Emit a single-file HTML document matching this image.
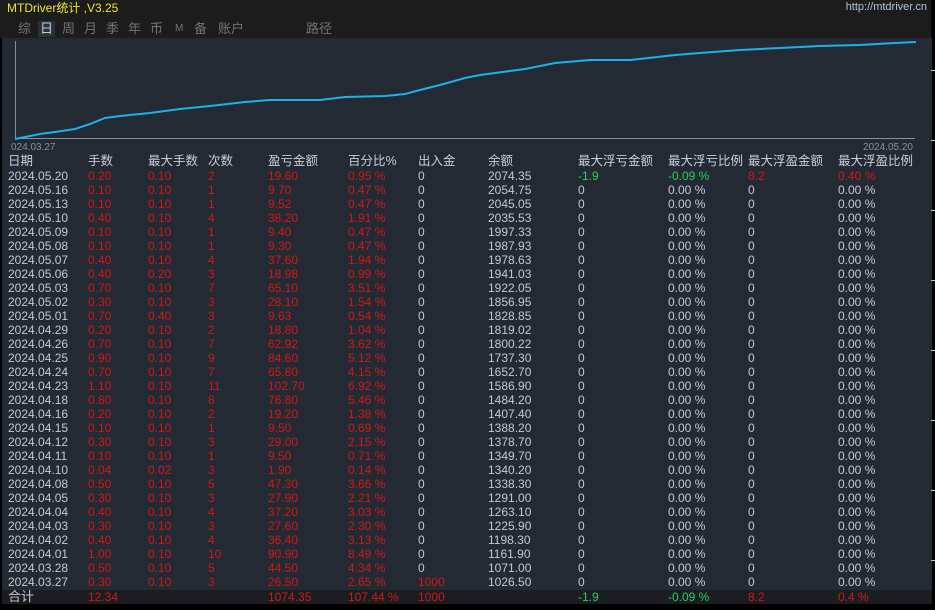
<!DOCTYPE html>
<html><head><meta charset="utf-8"><style>
*{margin:0;padding:0;box-sizing:border-box}
body{width:935px;height:610px;background:#000;position:relative;overflow:hidden;font-family:"Liberation Sans","Noto Sans CJK SC",sans-serif;font-size:12px;color:#c3c9d3}
.top{position:absolute;left:0;top:0;width:931px;height:38px;background:#1c1c1c}
.title{position:absolute;left:7px;top:1px;color:#e8e830;font-size:12px;line-height:14px}
.url{position:absolute;right:8px;top:1px;color:#b0c4de;font-size:11px}
.tabs{position:absolute;left:18px;top:21px;font-size:13px;color:#6e747c;line-height:16px}
.tabs span{position:absolute;white-space:nowrap}
.panel{position:absolute;left:2px;top:38px;width:930px;height:566px;background:#232a34}
.tot{position:absolute;left:2px;top:590px;width:930px;height:14px;background:#1b1d20}
.r{position:absolute;left:0;height:14px;line-height:14px;width:935px}
.r span{position:absolute;white-space:nowrap}
.r span:nth-child(1){left:8px}
.r span:nth-child(2){left:88px;color:#d01818}
.r span:nth-child(3){left:148px;color:#d01818}
.r span:nth-child(4){left:208px;color:#d01818}
.r span:nth-child(5){left:268px;color:#d01818}
.r span:nth-child(6){left:348px;color:#d01818}
.r span:nth-child(7){left:418px}
.r span:nth-child(8){left:488px}
.r span:nth-child(9){left:578px}
.r span:nth-child(10){left:668px}
.r span:nth-child(11){left:748px}
.r span:nth-child(12){left:838px}
.h{font-size:12.5px;color:#c8ced8}
.h span{color:#c8ced8!important}
.g{color:#22d060!important}.red{color:#d01818!important}
.side{position:absolute;left:931px;width:4px;height:1px;background:#ccc}
</style></head><body>
<div class="top"></div>
<div class="title">MTDriver统计 ,V3.25</div>
<div class="url">http://mtdriver.cn</div>
<div class="tabs">
<span style="left:0">综</span>
<span style="left:20px;background:#2a313b;color:#c8ced8;padding:0 2px">日</span>
<span style="left:44px">周</span><span style="left:66px">月</span><span style="left:88px">季</span><span style="left:110px">年</span><span style="left:132px">币</span><span style="left:157px;font-size:10px">M</span><span style="left:176px">备</span><span style="left:200px">账户</span><span style="left:288px">路径</span>
</div>
<div class="panel"></div>
<svg style="position:absolute;left:0;top:0" width="935" height="150">
<line x1="15.5" y1="41" x2="15.5" y2="138" stroke="#8a9098"/>
<line x1="15" y1="138.5" x2="915" y2="138.5" stroke="#8a9098"/>
<polyline fill="none" stroke="#1eb0e8" stroke-width="2" points="15,139 25,137 40,134 55,132 75,129 90,124 105,118 120,116 150,113 180,109 210,106 245,102 270,100 320,100 345,97 385,96 405,94 420,90 440,85 465,78 480,75 495,73 525,69 555,63 590,60 630,60 675,55 700,53 740,50 780,48 820,46 860,45 895,43 916,42"/>
<text x="11" y="150" fill="#8a9098" font-size="10" font-family="Liberation Sans">024.03.27</text>
<text x="913" y="150" fill="#8a9098" font-size="10" font-family="Liberation Sans" text-anchor="end">2024.05.20</text>
</svg>
<div class="tot"></div>
<div class="side" style="top:70px"></div><div class="side" style="top:140px"></div><div class="side" style="top:210px"></div><div class="side" style="top:280px"></div><div class="side" style="top:350px"></div><div class="side" style="top:420px"></div><div class="side" style="top:490px"></div><div class="side" style="top:560px"></div>
<div class="r h" style="top:154px"><span>日期</span><span>手数</span><span>最大手数</span><span>次数</span><span>盈亏金额</span><span>百分比%</span><span>出入金</span><span>余额</span><span>最大浮亏金额</span><span>最大浮亏比例</span><span>最大浮盈金额</span><span>最大浮盈比例</span></div>
<div class="r" style="top:169px"><span>2024.05.20</span><span>0.20</span><span>0.10</span><span>2</span><span>19.60</span><span>0.95 %</span><span>0</span><span>2074.35</span><span class="g">-1.9</span><span class="g">-0.09 %</span><span class="red">8.2</span><span class="red">0.40 %</span></div>
<div class="r" style="top:183px"><span>2024.05.16</span><span>0.10</span><span>0.10</span><span>1</span><span>9.70</span><span>0.47 %</span><span>0</span><span>2054.75</span><span>0</span><span>0.00 %</span><span>0</span><span>0.00 %</span></div>
<div class="r" style="top:197px"><span>2024.05.13</span><span>0.10</span><span>0.10</span><span>1</span><span>9.52</span><span>0.47 %</span><span>0</span><span>2045.05</span><span>0</span><span>0.00 %</span><span>0</span><span>0.00 %</span></div>
<div class="r" style="top:211px"><span>2024.05.10</span><span>0.40</span><span>0.10</span><span>4</span><span>38.20</span><span>1.91 %</span><span>0</span><span>2035.53</span><span>0</span><span>0.00 %</span><span>0</span><span>0.00 %</span></div>
<div class="r" style="top:225px"><span>2024.05.09</span><span>0.10</span><span>0.10</span><span>1</span><span>9.40</span><span>0.47 %</span><span>0</span><span>1997.33</span><span>0</span><span>0.00 %</span><span>0</span><span>0.00 %</span></div>
<div class="r" style="top:239px"><span>2024.05.08</span><span>0.10</span><span>0.10</span><span>1</span><span>9.30</span><span>0.47 %</span><span>0</span><span>1987.93</span><span>0</span><span>0.00 %</span><span>0</span><span>0.00 %</span></div>
<div class="r" style="top:253px"><span>2024.05.07</span><span>0.40</span><span>0.10</span><span>4</span><span>37.60</span><span>1.94 %</span><span>0</span><span>1978.63</span><span>0</span><span>0.00 %</span><span>0</span><span>0.00 %</span></div>
<div class="r" style="top:267px"><span>2024.05.06</span><span>0.40</span><span>0.20</span><span>3</span><span>18.98</span><span>0.99 %</span><span>0</span><span>1941.03</span><span>0</span><span>0.00 %</span><span>0</span><span>0.00 %</span></div>
<div class="r" style="top:281px"><span>2024.05.03</span><span>0.70</span><span>0.10</span><span>7</span><span>65.10</span><span>3.51 %</span><span>0</span><span>1922.05</span><span>0</span><span>0.00 %</span><span>0</span><span>0.00 %</span></div>
<div class="r" style="top:295px"><span>2024.05.02</span><span>0.30</span><span>0.10</span><span>3</span><span>28.10</span><span>1.54 %</span><span>0</span><span>1856.95</span><span>0</span><span>0.00 %</span><span>0</span><span>0.00 %</span></div>
<div class="r" style="top:309px"><span>2024.05.01</span><span>0.70</span><span>0.40</span><span>3</span><span>9.63</span><span>0.54 %</span><span>0</span><span>1828.85</span><span>0</span><span>0.00 %</span><span>0</span><span>0.00 %</span></div>
<div class="r" style="top:323px"><span>2024.04.29</span><span>0.20</span><span>0.10</span><span>2</span><span>18.80</span><span>1.04 %</span><span>0</span><span>1819.02</span><span>0</span><span>0.00 %</span><span>0</span><span>0.00 %</span></div>
<div class="r" style="top:337px"><span>2024.04.26</span><span>0.70</span><span>0.10</span><span>7</span><span>62.92</span><span>3.62 %</span><span>0</span><span>1800.22</span><span>0</span><span>0.00 %</span><span>0</span><span>0.00 %</span></div>
<div class="r" style="top:351px"><span>2024.04.25</span><span>0.90</span><span>0.10</span><span>9</span><span>84.60</span><span>5.12 %</span><span>0</span><span>1737.30</span><span>0</span><span>0.00 %</span><span>0</span><span>0.00 %</span></div>
<div class="r" style="top:365px"><span>2024.04.24</span><span>0.70</span><span>0.10</span><span>7</span><span>65.80</span><span>4.15 %</span><span>0</span><span>1652.70</span><span>0</span><span>0.00 %</span><span>0</span><span>0.00 %</span></div>
<div class="r" style="top:379px"><span>2024.04.23</span><span>1.10</span><span>0.10</span><span>11</span><span>102.70</span><span>6.92 %</span><span>0</span><span>1586.90</span><span>0</span><span>0.00 %</span><span>0</span><span>0.00 %</span></div>
<div class="r" style="top:393px"><span>2024.04.18</span><span>0.80</span><span>0.10</span><span>8</span><span>76.80</span><span>5.46 %</span><span>0</span><span>1484.20</span><span>0</span><span>0.00 %</span><span>0</span><span>0.00 %</span></div>
<div class="r" style="top:407px"><span>2024.04.16</span><span>0.20</span><span>0.10</span><span>2</span><span>19.20</span><span>1.38 %</span><span>0</span><span>1407.40</span><span>0</span><span>0.00 %</span><span>0</span><span>0.00 %</span></div>
<div class="r" style="top:421px"><span>2024.04.15</span><span>0.10</span><span>0.10</span><span>1</span><span>9.50</span><span>0.69 %</span><span>0</span><span>1388.20</span><span>0</span><span>0.00 %</span><span>0</span><span>0.00 %</span></div>
<div class="r" style="top:435px"><span>2024.04.12</span><span>0.30</span><span>0.10</span><span>3</span><span>29.00</span><span>2.15 %</span><span>0</span><span>1378.70</span><span>0</span><span>0.00 %</span><span>0</span><span>0.00 %</span></div>
<div class="r" style="top:449px"><span>2024.04.11</span><span>0.10</span><span>0.10</span><span>1</span><span>9.50</span><span>0.71 %</span><span>0</span><span>1349.70</span><span>0</span><span>0.00 %</span><span>0</span><span>0.00 %</span></div>
<div class="r" style="top:463px"><span>2024.04.10</span><span>0.04</span><span>0.02</span><span>3</span><span>1.90</span><span>0.14 %</span><span>0</span><span>1340.20</span><span>0</span><span>0.00 %</span><span>0</span><span>0.00 %</span></div>
<div class="r" style="top:477px"><span>2024.04.08</span><span>0.50</span><span>0.10</span><span>5</span><span>47.30</span><span>3.66 %</span><span>0</span><span>1338.30</span><span>0</span><span>0.00 %</span><span>0</span><span>0.00 %</span></div>
<div class="r" style="top:491px"><span>2024.04.05</span><span>0.30</span><span>0.10</span><span>3</span><span>27.90</span><span>2.21 %</span><span>0</span><span>1291.00</span><span>0</span><span>0.00 %</span><span>0</span><span>0.00 %</span></div>
<div class="r" style="top:505px"><span>2024.04.04</span><span>0.40</span><span>0.10</span><span>4</span><span>37.20</span><span>3.03 %</span><span>0</span><span>1263.10</span><span>0</span><span>0.00 %</span><span>0</span><span>0.00 %</span></div>
<div class="r" style="top:519px"><span>2024.04.03</span><span>0.30</span><span>0.10</span><span>3</span><span>27.60</span><span>2.30 %</span><span>0</span><span>1225.90</span><span>0</span><span>0.00 %</span><span>0</span><span>0.00 %</span></div>
<div class="r" style="top:533px"><span>2024.04.02</span><span>0.40</span><span>0.10</span><span>4</span><span>36.40</span><span>3.13 %</span><span>0</span><span>1198.30</span><span>0</span><span>0.00 %</span><span>0</span><span>0.00 %</span></div>
<div class="r" style="top:547px"><span>2024.04.01</span><span>1.00</span><span>0.10</span><span>10</span><span>90.90</span><span>8.49 %</span><span>0</span><span>1161.90</span><span>0</span><span>0.00 %</span><span>0</span><span>0.00 %</span></div>
<div class="r" style="top:561px"><span>2024.03.28</span><span>0.50</span><span>0.10</span><span>5</span><span>44.50</span><span>4.34 %</span><span>0</span><span>1071.00</span><span>0</span><span>0.00 %</span><span>0</span><span>0.00 %</span></div>
<div class="r" style="top:575px"><span>2024.03.27</span><span>0.30</span><span>0.10</span><span>3</span><span>26.50</span><span>2.65 %</span><span class="red">1000</span><span>1026.50</span><span>0</span><span>0.00 %</span><span>0</span><span>0.00 %</span></div>
<div class="r" style="top:590px"><span style="font-size:13px">合计</span><span>12.34</span><span></span><span></span><span>1074.35</span><span>107.44 %</span><span class="red">1000</span><span></span><span class="g">-1.9</span><span class="g">-0.09 %</span><span class="red">8.2</span><span class="red">0.4 %</span></div>
</body></html>
